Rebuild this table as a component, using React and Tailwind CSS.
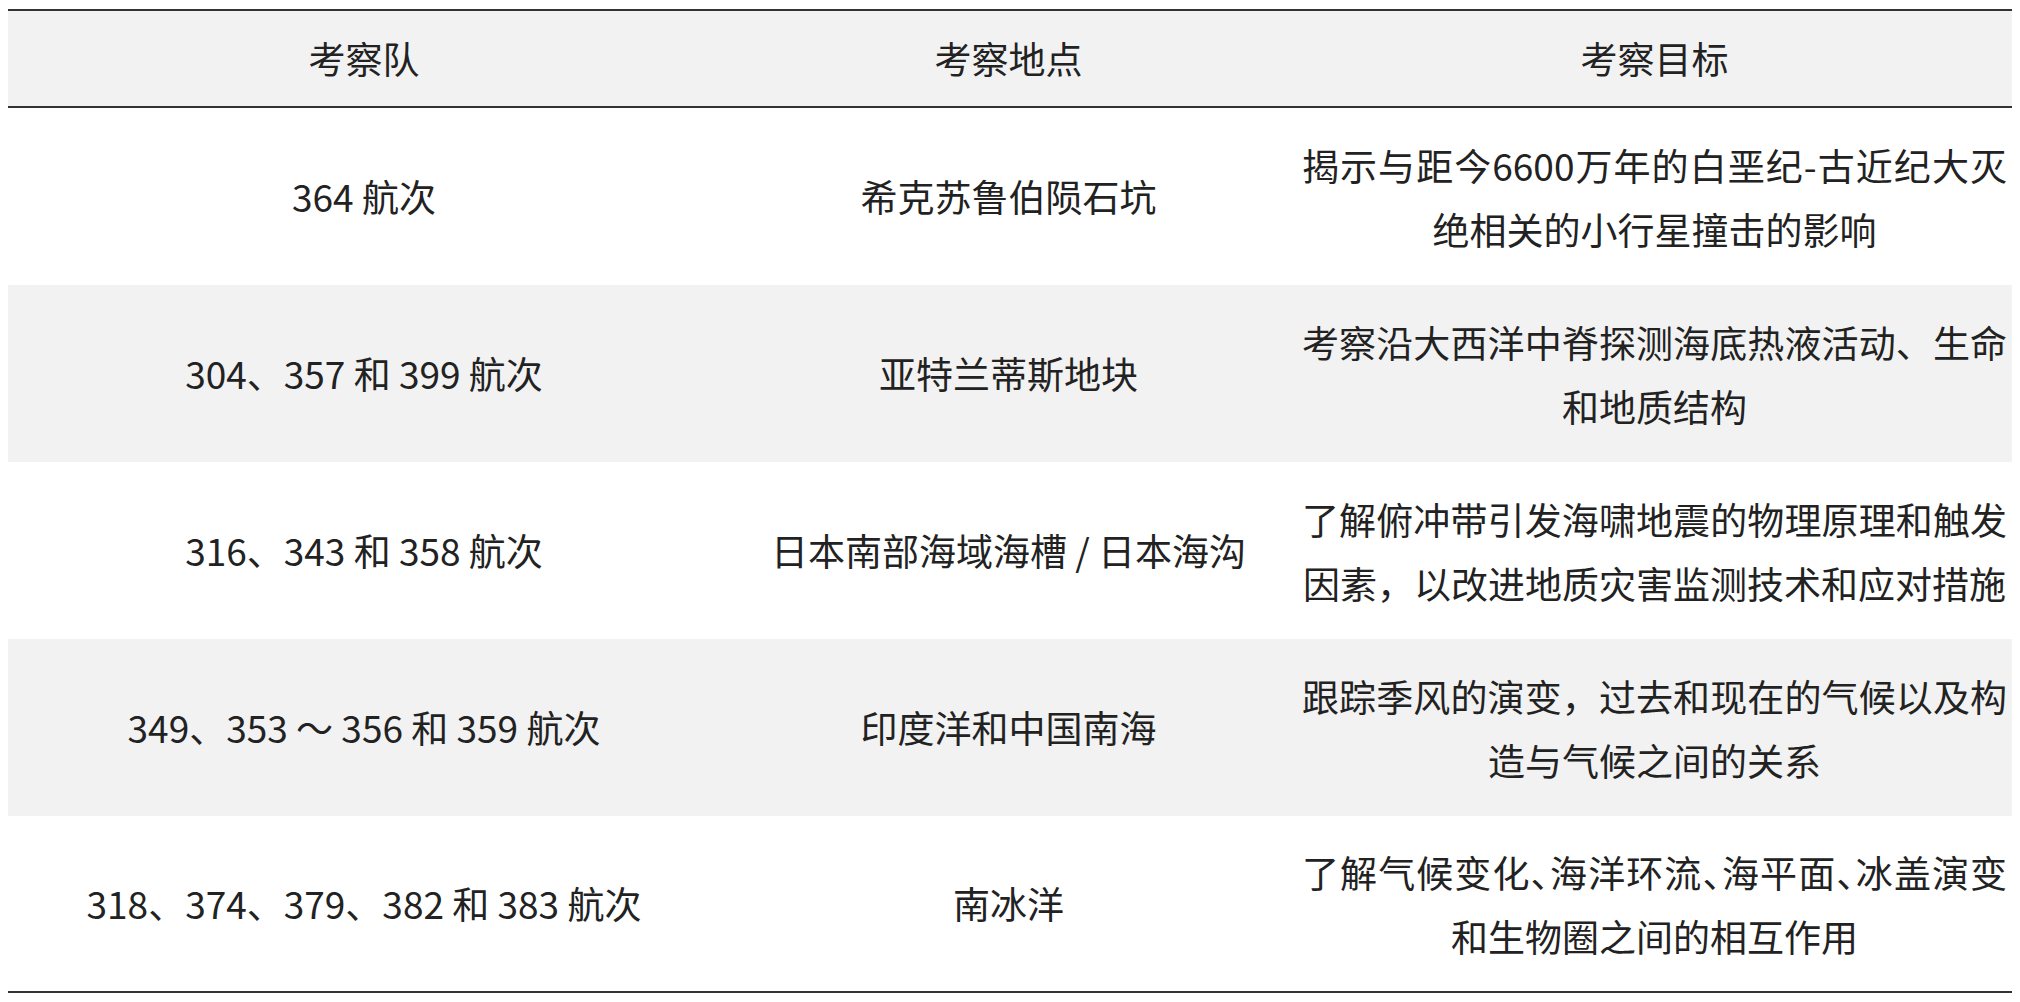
import React from "react";

const rows = [
  {
    team: "364 航次",
    place: "希克苏鲁伯陨石坑",
    goal: ["揭示与距今6600万年的白垩纪-古近纪大灭", "绝相关的小行星撞击的影响"],
  },
  {
    team: "304、357 和 399 航次",
    place: "亚特兰蒂斯地块",
    goal: ["考察沿大西洋中脊探测海底热液活动、生命", "和地质结构"],
  },
  {
    team: "316、343 和 358 航次",
    place: "日本南部海域海槽 / 日本海沟",
    goal: ["了解俯冲带引发海啸地震的物理原理和触发", "因素，以改进地质灾害监测技术和应对措施"],
  },
  {
    team: "349、353 ～ 356 和 359 航次",
    place: "印度洋和中国南海",
    goal: ["跟踪季风的演变，过去和现在的气候以及构", "造与气候之间的关系"],
  },
  {
    team: "318、374、379、382 和 383 航次",
    place: "南冰洋",
    goal: ["了解气候变化、海洋环流、海平面、冰盖演变", "和生物圈之间的相互作用"],
    halt: true,
  },
];

function Line({ text, halt }) {
  if (!halt) return text;
  const parts = text.split("、");
  return parts.map((p, i) => (
    <React.Fragment key={i}>
      {p}
      {i < parts.length - 1 && (
        <span className="[font-feature-settings:'halt']">、</span>
      )}
    </React.Fragment>
  ));
}

export default function App() {
  return (
    <div
      className="w-[2020px] h-[1002px] bg-white px-2 pt-[9px] text-[#222] text-[37px]"
      style={{ fontFamily: '"Noto Sans CJK SC", "Noto Sans", sans-serif' }}
    >
      <div className="grid grid-cols-[712px_577px_715px] h-[99px] border-t-2 border-b-2 border-[#333] bg-[#f2f2f2]">
        <div className="flex items-center justify-center">考察队</div>
        <div className="flex items-center justify-center">考察地点</div>
        <div className="flex items-center justify-center">考察目标</div>
      </div>
      {rows.map((r, i) => (
        <div
          key={i}
          className={
            "grid grid-cols-[712px_577px_715px] h-[177px] " +
            (i % 2 === 1 ? "bg-[#f2f2f2] " : "bg-white ") +
            (i === rows.length - 1 ? "border-b-2 border-[#333]" : "")
          }
        >
          <div className="flex items-center justify-center whitespace-nowrap">{r.team}</div>
          <div className="flex items-center justify-center whitespace-nowrap">{r.place}</div>
          <div className="flex flex-col justify-center px-[5px] leading-[64px]">
            <div className="whitespace-nowrap text-justify [text-align-last:justify]">
              <Line text={r.goal[0]} halt={r.halt} />
            </div>
            <div className="whitespace-nowrap text-center">{r.goal[1]}</div>
          </div>
        </div>
      ))}
    </div>
  );
}
